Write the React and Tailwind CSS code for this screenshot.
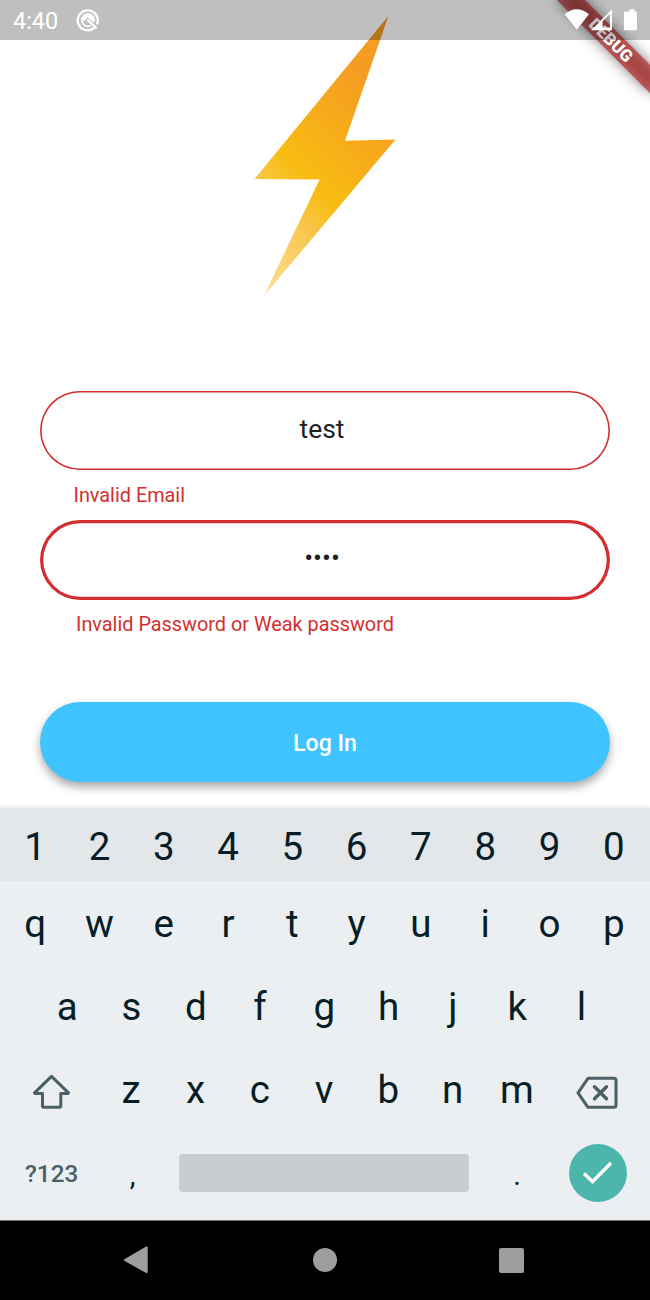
const KEY = "flex w-[64.3px] shrink-0 items-center justify-center";

function Keys({ chars }) {
  return [...chars].map((c) => (
    <button key={c} type="button" className={KEY}>
      {c}
    </button>
  ));
}

function StatusBar() {
  return (
    <header className="absolute inset-x-0 top-0 flex h-10 items-center bg-black/25 pl-[13px] text-white">
      <span className="pt-[3px] text-[23.4px] leading-none">4:40</span>
      <svg className="ml-[18px]" width="24" height="24" viewBox="0 0 24 24" fill="none" stroke="currentColor">
        <path d="M18.2 20A10 10 0 1 1 20.9 16.4" strokeWidth="2.3" />
        <path d="M14.8 17.6A6.2 6.2 0 1 1 17.9 13.9" strokeWidth="1.7" />
        <path d="M6.4 11Q8 6 12.2 6 16.4 6.2 17.6 11L17.4 14.4 12 9.6 7.6 13.4Z" fill="currentColor" stroke="none" />
        <path d="M11.4 11.6 20.6 20.4" strokeWidth="2.3" />
      </svg>
      <svg className="absolute left-[564px] top-[8px]" width="74" height="24" viewBox="0 0 74 24" fill="#fff">
        <path d="M.7 6.3Q12.7-3.8 24.9 6.3L12.8 21.8Z" />
        <path fillRule="evenodd" d="M27.2 22.2 48 1.2V22.2ZM46 5.8 38.6 13.2V19.6H46Z" />
        <path d="M65.3 3.4V2.2Q65.3 1 66.5 1H69.6Q70.8 1 70.8 2.2V3.4H71.8Q73 3.4 73 4.6V20.8Q73 22 71.8 22H61.2Q60 22 60 20.8V4.6Q60 3.4 61.2 3.4Z" transform="translate(0 .2)" />
      </svg>
    </header>
  );
}

function DebugBanner() {
  return (
    <div className="absolute right-0 top-0 h-[132px] w-[132px] overflow-hidden">
      <div className="absolute left-[26.5px] top-[29.5px] h-[20px] w-[132px] rotate-45">
        <div className="absolute inset-0 bg-black/50 blur-[6.5px]" />
        <div className="absolute inset-0 flex items-center justify-center bg-[#b71c1c]/63 text-[16.9px] font-black leading-none text-white">
          DEBUG
        </div>
      </div>
    </div>
  );
}

export default function App() {
  return (
    <div className="relative flex h-[1300px] w-[650px] flex-col overflow-hidden bg-white font-['Roboto',sans-serif]">
      <main className="flex h-[808px] shrink-0 flex-col px-10 pt-[15px]">
        <svg className="self-center" width="142" height="282" viewBox="254 15 142 282">
          <defs>
            <linearGradient id="bolt" gradientUnits="userSpaceOnUse" x1="340" y1="50" x2="179" y2="211">
              <stop offset="0" stopColor="#f59c22" />
              <stop offset=".51" stopColor="#f8bc12" />
              <stop offset=".66" stopColor="#f8c64b" />
              <stop offset="1" stopColor="#fce09a" />
            </linearGradient>
          </defs>
          <path fill="url(#bolt)" d="M388.5 15.7 345 140.8 395.5 139.6 264 295.7 319.6 179.4 254.5 179Z" />
        </svg>

        <div className="mt-[94px] flex h-[79px] items-center justify-center rounded-full pb-[3px] text-[26.4px] leading-none text-[#212121] shadow-[inset_0_0_0_1.6px_#d32f2f]">
          <span className="-translate-x-[3px]">test</span>
        </div>
        <p className="mt-[14px] h-[24px] pl-[33.5px] text-[19.85px] leading-[24px] text-[#d32f2f]">Invalid Email</p>

        <div className="mt-[12px] flex h-[80px] items-center justify-center rounded-full pb-[3px] text-[26.4px] leading-none text-[#212121] shadow-[inset_0_0_0_3.3px_#d32f2f]">
          <span className="-translate-x-[3px]">••••</span>
        </div>
        <p className="mt-[13px] h-[24px] pl-[36px] text-[19.85px] leading-[24px] text-[#d32f2f]">
          Invalid Password or Weak password
        </p>

        <button
          type="button"
          className="mt-[65px] flex h-[80px] items-center justify-center rounded-full bg-[#40c4ff] pt-[3px] text-[23.1px] font-medium leading-none text-white shadow-[0_5px_10px_rgba(0,0,0,0.34)]"
        >
          Log In
        </button>
      </main>

      <section className="relative flex h-[412px] shrink-0 flex-col bg-[#ebeff2] text-[38.5px] leading-none text-[#071e27] shadow-[0_-1px_4px_rgba(0,0,0,0.12)]">
        <div className="flex h-[73px] bg-[#e3e7ea] pl-[3px] pt-[6px]">
          <Keys chars="1234567890" />
        </div>
        <div className="flex h-[84px] pl-[3px] pt-[2px]">
          <Keys chars="qwertyuiop" />
        </div>
        <div className="flex h-[83px] pl-[35px] pt-[1px]">
          <Keys chars="asdfghjkl" />
        </div>
        <div className="flex h-[83px] items-stretch pt-[2px]">
          <div className="flex w-[99px] items-center pl-[32px]">
            <svg width="40" height="38" viewBox="0 0 40 38" fill="none" stroke="#4c5e66" strokeWidth="3" strokeLinejoin="round">
              <path d="M19.5 4.3 2.5 20.8 3 21.5H10.5V34.5L11.5 35.3H28L28.8 34.5V21.5H36L36.5 20.8Z" />
            </svg>
          </div>
          <Keys chars="zxcvbnm" />
          <div className="flex flex-1 items-center pl-[27px] pt-[5px]">
            <svg width="43" height="36" viewBox="0 0 43 36" fill="none" stroke="#4c5e66" strokeWidth="3" strokeLinejoin="round">
              <path d="M12 3.3H38Q40 3.3 40 5.3V30.3Q40 32.3 38 32.3H12L2 17.8Z" />
              <path d="M18.5 11.8 30.5 23.8M30.5 11.8 18.5 23.8" strokeWidth="3.4" strokeLinecap="round" />
            </svg>
          </div>
        </div>
        <div className="flex h-[89px] items-center pb-[6px]">
          <span className="w-[100px] pl-[25px] pt-[3px] text-[24.3px] font-medium text-[#4c5e66]">?123</span>
          <span className="w-[65px] pt-[5px] text-center text-[29px]">,</span>
          <div className="ml-[14px] h-[38px] w-[290px] rounded-[4px] bg-[#c9cdd0]" />
          <span className="ml-[16px] w-[64px] pt-[5px] text-center text-[29px]">.</span>
          <div className="ml-[20px] flex h-[58px] w-[58px] items-center justify-center rounded-full bg-[#4db6ac]">
            <svg width="32" height="26" viewBox="0 0 32 26" fill="none" stroke="#fff" strokeWidth="3.4">
              <path d="M2 13.6 10.5 21.6 29 3" />
            </svg>
          </div>
        </div>
      </section>

      <nav className="relative flex h-20 items-center bg-black pl-[123px] text-[#9e9e9e] shadow-[inset_0_1px_0_#6f7172]">
        <svg width="26" height="28" viewBox="0 0 26 28" fill="currentColor">
          <path d="M1.3 13.2 22.8.8Q24.7 0 24.7 1.6V26Q24.7 27.6 22.8 26.8L1.3 14.8Q.3 14 1.3 13.2Z" />
        </svg>
        <div className="ml-[164px] h-[24px] w-[24px] rounded-full bg-[#9e9e9e]" />
        <div className="ml-[162px] h-[25px] w-[25px] rounded-[2px] bg-[#9e9e9e]" />
      </nav>

      <DebugBanner />
      <StatusBar />
    </div>
  );
}
